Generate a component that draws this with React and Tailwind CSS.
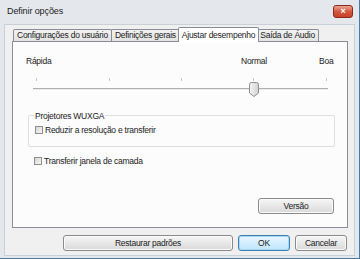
import React from "react";

function Tab({ label, active }) {
  if (active) {
    return (
      <div className="relative z-10 -mb-px h-[15px] -mx-[2px] px-[3px] flex items-center border border-b-0 border-[#898c95] bg-white rounded-t-[2px]">
        {label}
      </div>
    );
  }
  return (
    <div className="h-[12px] px-[3px] flex items-center border border-b-0 border-[#898c95] -ml-px first:ml-0 bg-gradient-to-b from-[#f2f2f2] to-[#e3e3e3] rounded-t-[2px]">
      {label}
    </div>
  );
}

function Check({ label }) {
  return (
    <div className="flex items-center gap-[2px]">
      <span className="w-[8px] h-[8px] border border-[#8f8f8f] bg-gradient-to-br from-[#d6d6d6] to-[#f8f8f8]" />
      <span>{label}</span>
    </div>
  );
}

function Btn({ children, className, primary }) {
  return (
    <button
      className={
        "h-[16px] flex items-center justify-center rounded-[3px] border " +
        (primary
          ? "border-[#3c7fb1] bg-gradient-to-b from-[#eaf6fd] to-[#bee6fd] shadow-[inset_0_0_0_1px_#a7d9f5] "
          : "border-[#8a8a8a] bg-gradient-to-b from-[#f6f6f6] to-[#d9d9d9] shadow-[inset_0_0_0_1px_#fbfbfb] ") +
        className
      }
    >
      {children}
    </button>
  );
}

export default function App() {
  return (
    <div className="w-[360px] h-[259px] bg-[#e4e8ed] border-r border-b border-[#4a7aa6] flex flex-col font-['Liberation_Sans',sans-serif] text-[8.5px] tracking-[-0.25px] text-[#1b1b1b] leading-none">
      <div className="h-[24px] flex items-start justify-between pl-[7px] pr-[6px]">
        <span className="mt-[7px] text-[9px] tracking-[-0.1px]">Definir opções</span>
        <div className="mt-[5px] w-[20px] h-[13px] rounded-[3px] border border-[#8b2a1c] bg-gradient-to-b from-[#e8a493] via-[#d4563f] to-[#c7402a] flex items-center justify-center text-white text-[9px] font-bold">
          ×
        </div>
      </div>

      <div className="flex-1 mx-[4px] mb-[2px] bg-[#f0f0f0] border border-[#c9d0d8] flex flex-col">
        <div className="ml-[8px] mt-[2px] flex items-end h-[14px]">
          <Tab label="Configurações do usuário" />
          <Tab label="Definições gerais" />
          <Tab label="Ajustar desempenho" active />
          <Tab label="Saída de Áudio" />
        </div>

        <div className="ml-[7px] w-[336px] h-[187px] bg-[#fcfcfc] border border-[#898c95] flex flex-col">
          <div className="relative h-[60px]">
            <span className="absolute left-[13px] top-[15px]">Rápida</span>
            <span className="absolute left-[228px] top-[15px]">Normal</span>
            <span className="absolute left-[306px] top-[15px]">Boa</span>
            <span className="absolute left-[23px] top-[36px] w-px h-[3px] bg-[#c8c8c8]" />
            <span className="absolute left-[96px] top-[36px] w-px h-[3px] bg-[#c8c8c8]" />
            <span className="absolute left-[168px] top-[36px] w-px h-[3px] bg-[#c8c8c8]" />
            <span className="absolute left-[240px] top-[36px] w-px h-[3px] bg-[#c8c8c8]" />
            <span className="absolute left-[313px] top-[36px] w-px h-[3px] bg-[#c8c8c8]" />
            <span className="absolute left-[20px] right-[19px] top-[46px] h-[3px] border-t border-[#b0b0b0] bg-[#e7eaea] border-b border-b-white" />
            <svg className="absolute left-[236px] top-[40px]" width="10" height="15" viewBox="0 0 10 15">
              <defs>
                <linearGradient id="th" x1="0" y1="0" x2="1" y2="0">
                  <stop offset="0" stopColor="#f4f4f4" />
                  <stop offset="1" stopColor="#d2d2d2" />
                </linearGradient>
              </defs>
              <path d="M2.5 0.5 H7.5 Q9.5 0.5 9.5 2.5 V11 L5 14.5 L0.5 11 V2.5 Q0.5 0.5 2.5 0.5 Z" fill="url(#th)" stroke="#8d8d8d" />
            </svg>
          </div>

          <div className="relative ml-[15px] mt-[13px] w-[307px] h-[32px] border border-[#dcdfe3] rounded-[2px]">
            <span className="absolute left-[5px] -top-[4px] px-px bg-[#fcfcfc]">Projetores WUXGA</span>
            <div className="ml-[6px] mt-[10px]">
              <Check label="Reduzir a resolução e transferir" />
            </div>
          </div>

          <div className="ml-[21px] mt-[10px]">
            <Check label="Transferir janela de camada" />
          </div>

          <div className="flex-1" />
          <div className="flex justify-end pr-[13px] pb-[13px]">
            <Btn className="w-[76px]">Versão</Btn>
          </div>
        </div>

        <div className="mt-[7px] ml-[58px] flex gap-[5px]">
          <Btn className="w-[170px]">Restaurar padrões</Btn>
          <Btn className="w-[52px]" primary>OK</Btn>
          <Btn className="w-[52px]">Cancelar</Btn>
        </div>
      </div>
    </div>
  );
}
